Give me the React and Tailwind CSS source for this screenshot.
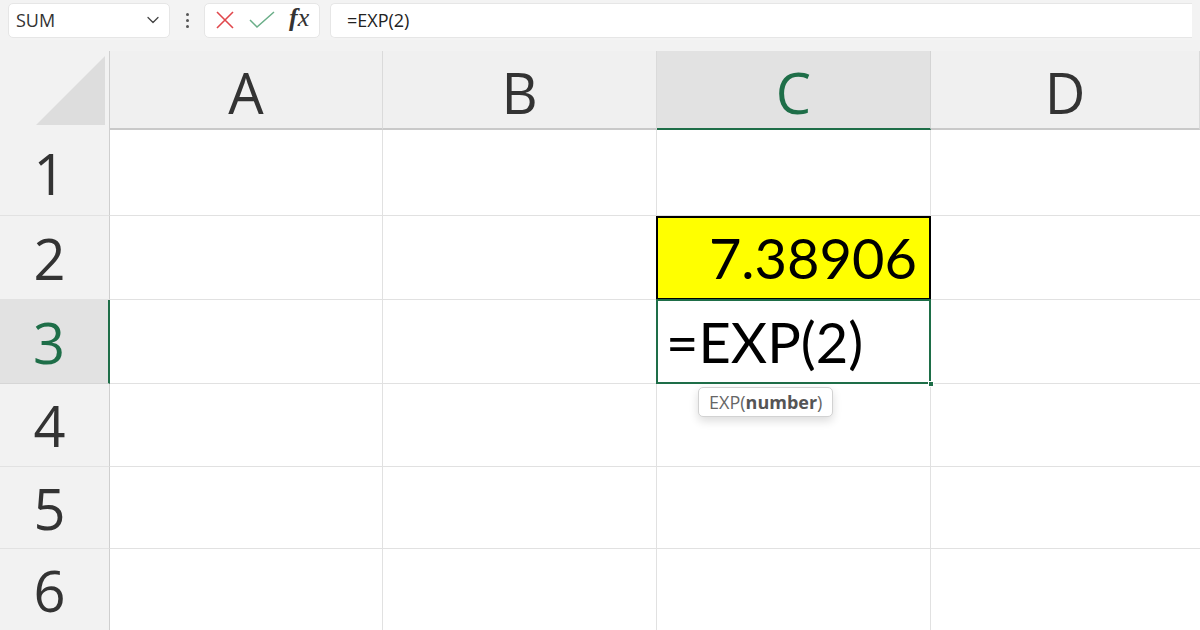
import { ChevronDown } from "lucide-react";

const uiFont = { fontFamily: '"Open Sans", "Noto Sans", sans-serif' };
const cellFont = { fontFamily: 'Lato, "Liberation Sans", sans-serif' };

const rows = [
  { n: 1, h: "h-[86px]" },
  { n: 2, h: "h-[84px]" },
  { n: 3, h: "h-[84px]" },
  { n: 4, h: "h-[83px]" },
  { n: 5, h: "h-[82px]" },
  { n: 6, h: "h-[83px]" },
];

function FormulaBar() {
  return (
    <div className="h-[40px] flex items-center gap-0 px-2 bg-[#f3f3f3]" style={uiFont}>
      {/* name box */}
      <div className="w-[162px] h-[35px] bg-white rounded-[5px] border border-[#e6e6e6] flex items-center justify-between pl-[7px] pr-[6px]">
        <span className="text-[18px] text-[#333]">SUM</span>
        <ChevronDown className="size-[20px] text-[#444]" strokeWidth={1.5} />
      </div>
      {/* dots */}
      <div className="w-[34px] flex flex-col items-center gap-[3px]">
        <span className="size-[3px] bg-[#555] rounded-full" />
        <span className="size-[3px] bg-[#555] rounded-full" />
        <span className="size-[3px] bg-[#555] rounded-full" />
      </div>
      {/* cancel / enter / fx */}
      <div className="w-[116px] h-[35px] bg-white rounded-[5px] border border-[#e6e6e6] flex items-center pl-[10px] gap-[14px]">
        <svg width="20" height="20" viewBox="0 0 20 20">
          <path d="M2 2 L18 18 M18 2 L2 18" stroke="#e0474c" strokeWidth="1.6" fill="none" />
        </svg>
        <svg width="26" height="18" viewBox="0 0 26 18">
          <path d="M1 9 L8 16 L25 1" stroke="#6aae88" strokeWidth="1.5" fill="none" />
        </svg>
        <span
          className="text-[26px] italic text-[#333] leading-none -mt-[4px]"
          style={{ fontFamily: '"Liberation Serif", serif' }}
        >
          <span className="font-bold">f</span>x
        </span>
      </div>
      <div className="ml-[10px] flex-1 h-[35px] bg-white rounded-l-[5px] border border-[#e6e6e6] border-r-0 flex items-center pl-[16px]">
        <span className="text-[18px] text-[#222]">=EXP(2)</span>
      </div>
    </div>
  );
}

function HeaderRow() {
  const cols = [
    { l: "A", w: "w-[273px]" },
    { l: "B", w: "w-[274px]" },
    { l: "C", w: "w-[274px]", active: true },
    { l: "D", w: "flex-1" },
  ];
  return (
    <div className="flex h-[79px]" style={uiFont}>
      <div className="w-[110px] shrink-0 bg-[#f2f2f2] border-r border-[#cfcfcf] flex items-end pb-[5px] pl-[36px]">
        <svg width="70" height="70" viewBox="0 0 70 70">
          <polygon points="0,70 69,70 69,1" fill="#dddddd" />
        </svg>
      </div>
      {cols.map((c) => (
        <div
          key={c.l}
          className={`${c.w} shrink-0 border-r flex items-center justify-center pt-[4px] text-[56px] leading-none ${
            c.active
              ? "bg-[#e2e2e2] border-[#d4d4d4] border-b-2 border-b-[#1e6e48] text-[#1e6e48]"
              : "bg-[#f0f0f0] border-[#dadada] border-b-2 border-b-[#c9c9c9] text-[#333]"
          }`}
        >
          {c.l}
        </div>
      ))}
    </div>
  );
}

function Row({ n, h }) {
  const active = n === 3;
  return (
    <div className={`flex ${h}`}>
      <div
        className={`w-[110px] shrink-0 flex items-center justify-center pr-[10px] text-[56px] leading-none border-b ${
          active
            ? "bg-[#e2e2e2] border-b-[#d6d6d6] border-r-2 border-r-[#1e6e48] text-[#1e6e48]"
            : "bg-[#f2f2f2] border-b-[#e2e2e2] border-r border-r-[#cfcfcf] text-[#333]"
        }`}
        style={uiFont}
      >
        {n}
      </div>
      <div className="w-[273px] shrink-0 bg-white border-r border-b border-[#e1e1e1]" />
      <div className="w-[274px] shrink-0 bg-white border-r border-b border-[#e1e1e1]" />
      {n === 2 ? (
        <div
          className="w-[275px] shrink-0 -ml-px bg-[#ffff00] border-2 border-black flex items-center justify-end pr-[12px] text-[56px] leading-none text-black"
          style={cellFont}
        >
          7.38906
        </div>
      ) : n === 3 ? (
        <div
          className="relative w-[275px] shrink-0 -ml-px -mt-px bg-white border-2 border-[#1e6e48] flex items-center pl-[8px] text-[56px] leading-none text-black"
          style={cellFont}
        >
          =EXP(2)
          <span className="absolute -right-[5px] -bottom-[5px] size-[6px] bg-[#1e6e48] border border-white" />
          <div
            className="absolute left-[40px] top-full mt-[5px] h-[30px] px-[10px] flex items-center bg-white border border-[#d2d2d2] rounded-[5px] shadow-[0_4px_10px_rgba(0,0,0,0.14)] text-[18px] leading-none text-[#666] whitespace-nowrap z-10"
            style={uiFont}
          >
            EXP(<span className="font-bold text-[#555]">number</span>)
          </div>
        </div>
      ) : (
        <div className="w-[274px] shrink-0 bg-white border-r border-b border-[#e1e1e1]" />
      )}
      <div className="flex-1 bg-white border-b border-[#e1e1e1]" />
    </div>
  );
}

export default function App() {
  return (
    <div className="w-[1200px] h-[630px] overflow-hidden bg-[#f2f2f2]">
      <FormulaBar />
      <div className="h-[11px] bg-[#f2f2f2]" />
      <HeaderRow />
      {rows.map((r) => (
        <Row key={r.n} {...r} />
      ))}
    </div>
  );
}
